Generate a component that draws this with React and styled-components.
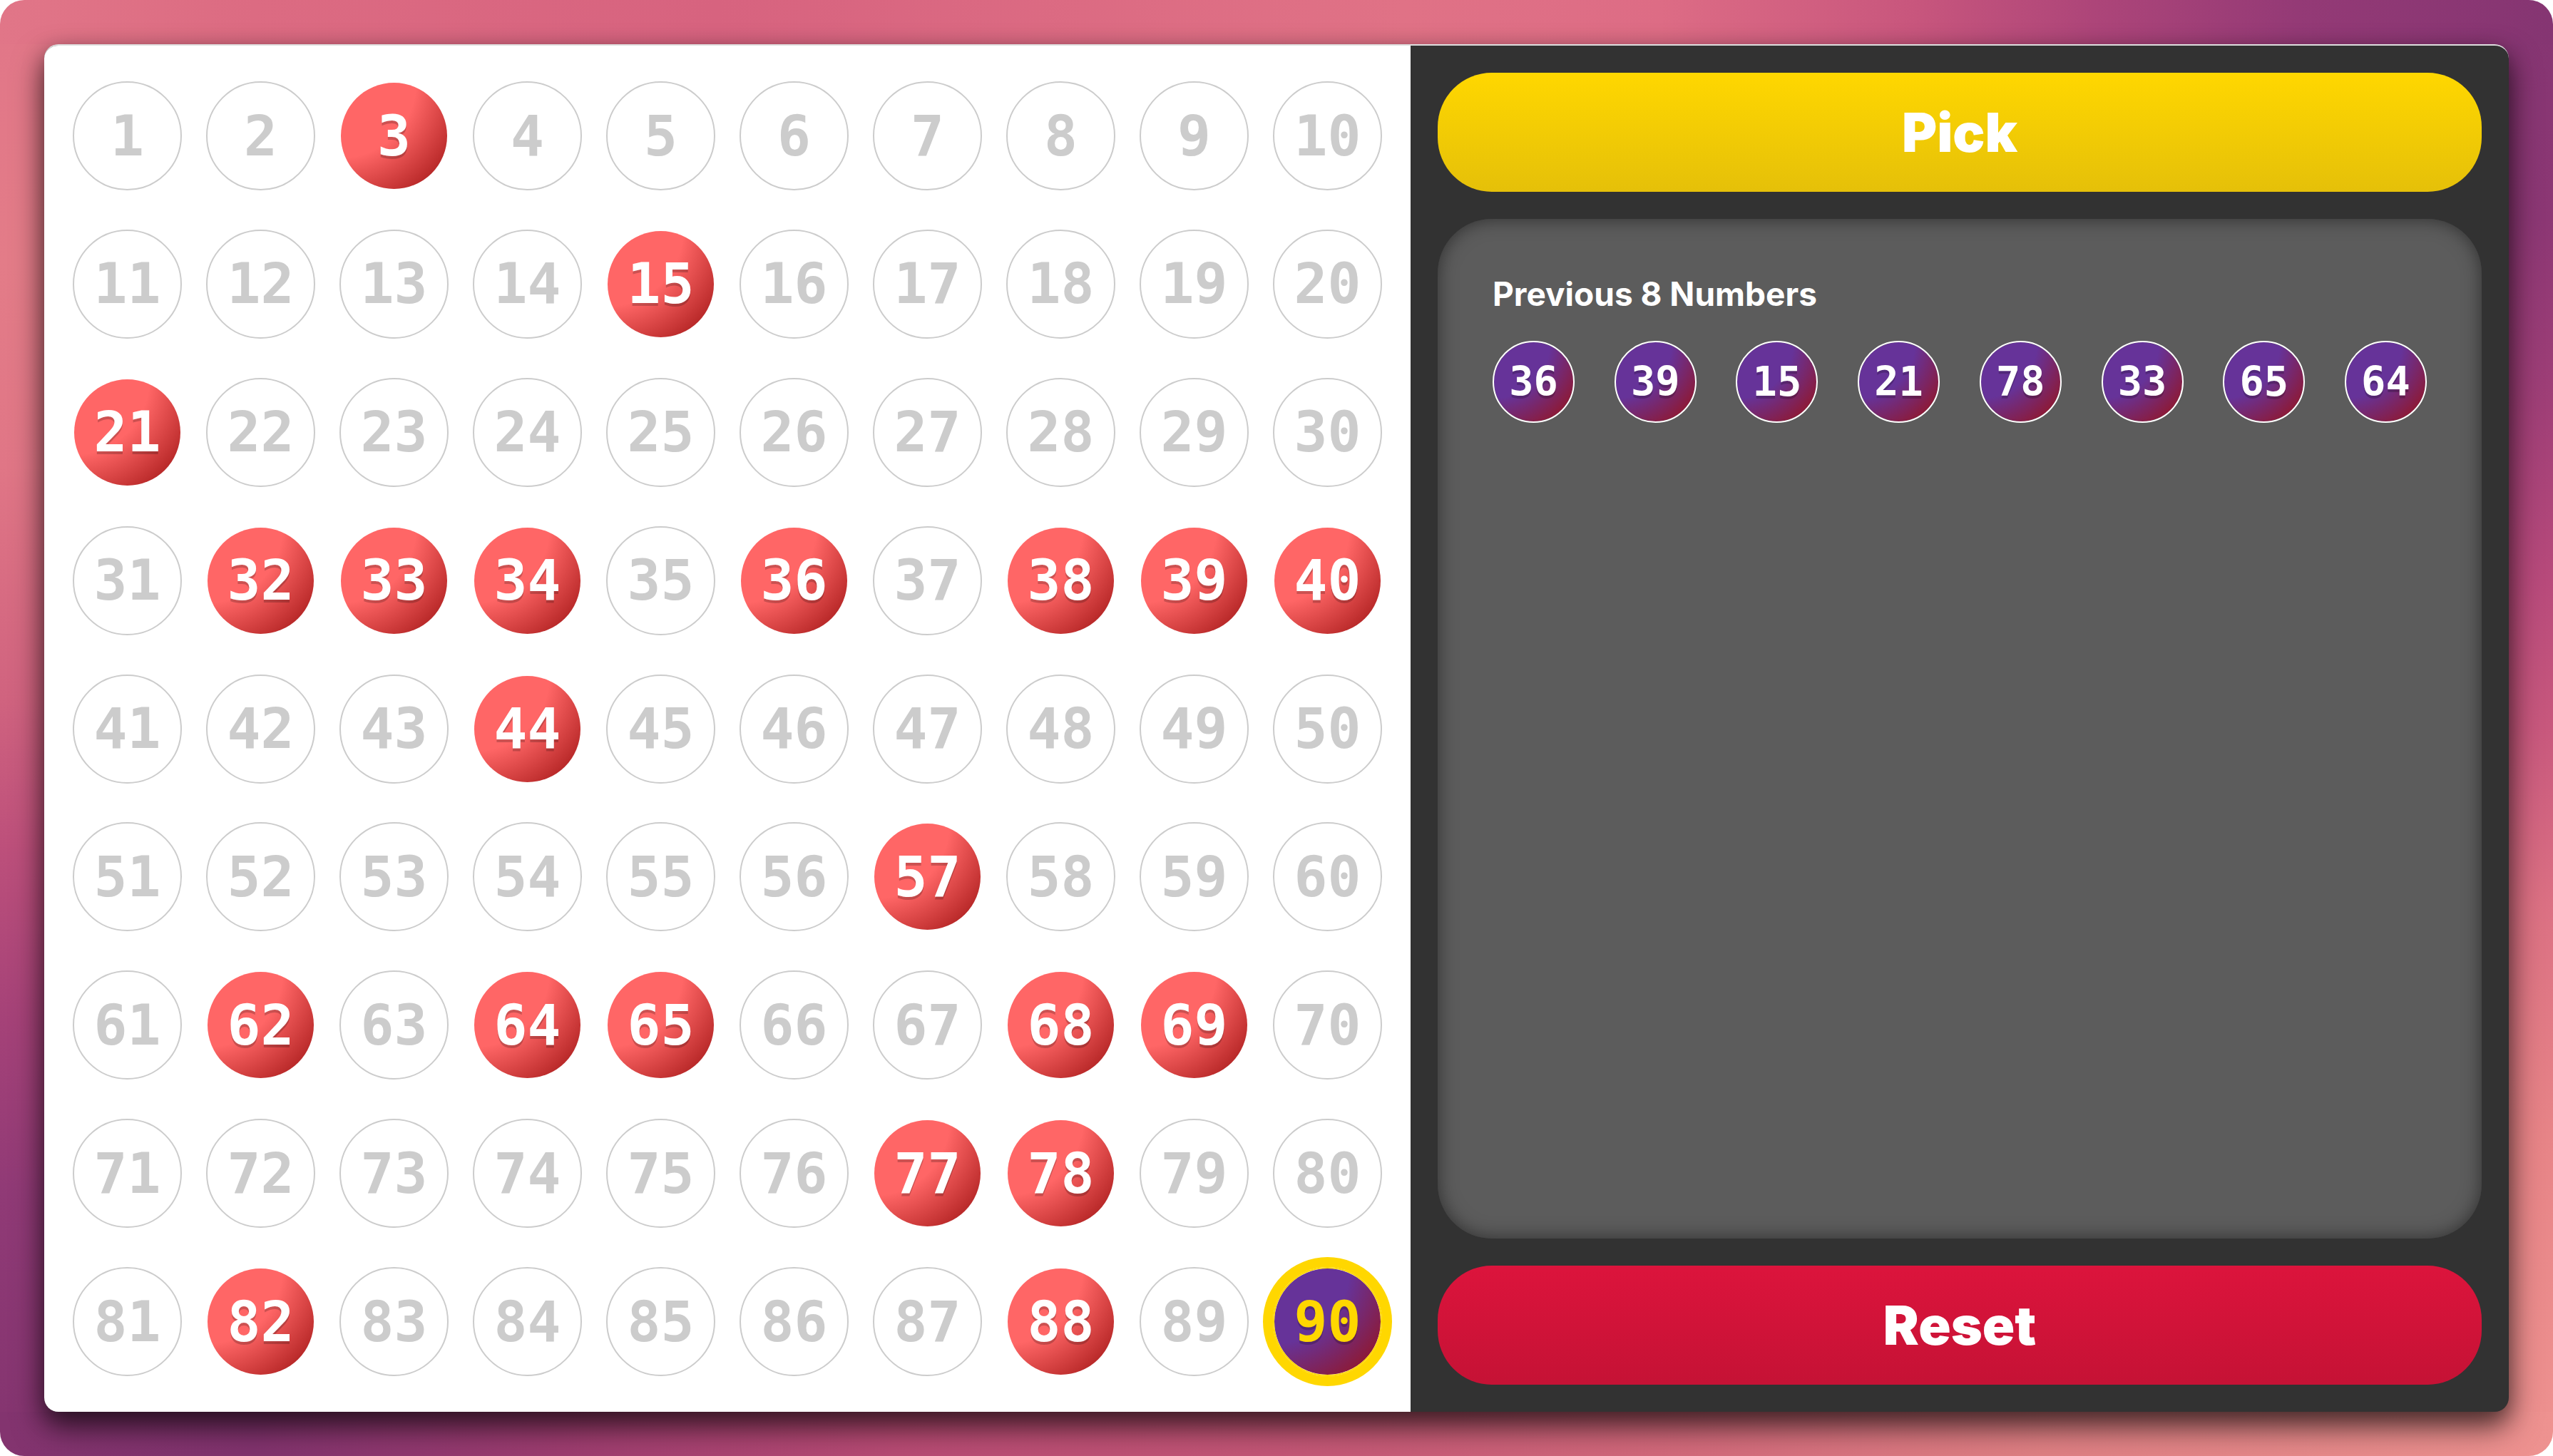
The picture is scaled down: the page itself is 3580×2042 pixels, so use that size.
import React, { useState } from "react";
import styled, { createGlobalStyle, css } from "styled-components";

const GlobalStyle = createGlobalStyle`
  *, *::before, *::after { box-sizing: border-box; }
  body { margin: 0; background: #fff; font-family: Inter, Roboto, sans-serif; }
`;

const Desktop = styled.div`
  height: 100vh;
  padding: 62px;
  display: flex;
  border-radius: 34px;
  background:
    linear-gradient(90deg, #e17688 0%, #dc6b82 10%, #d7637f 28%, #e07286 55%, #dd6c85 65%, #c8567d 75%, #ad4579 82%, #943a76 90%, #853572 100%) top / 100% 62px no-repeat,
    linear-gradient(90deg, #83346f 0%, #82336e 10%, #9e3d70 22%, #b84b74 35%, #c45676 50%, #d3697b 65%, #e08084 80%, #ee9290 100%) bottom / 100% 62px no-repeat,
    linear-gradient(#e17688 0%, #e37c88 18%, #e07686 32%, #d0637f 48%, #bd507b 58%, #a54278 70%, #903a76 82%, #83346f 100%) left / 50% 100% no-repeat,
    linear-gradient(#853572 0%, #8c3774 15%, #a03f77 28%, #b84a7b 40%, #c8587d 50%, #db7083 62%, #e78487 78%, #ee9290 100%) right / 50% 100% no-repeat;
`;

const AppWindow = styled.main`
  flex: 1;
  min-height: 0;
  display: flex;
  border-top: 2px solid #dedede;
  border-radius: 20px;
  overflow: hidden;
  background: #323232;
  box-shadow: 0 22px 44px rgba(0, 0, 0, 0.55), 0 10px 30px rgba(0, 0, 0, 0.35);
`;

const Board = styled.section`
  height: 100%;
  aspect-ratio: 1;
  padding: 50px 40px;
  display: grid;
  grid-template-columns: repeat(10, 1fr);
  column-gap: 34px;
  align-content: space-between;
  background: #fff;
`;

const ballBase = css`
  display: flex;
  align-items: center;
  justify-content: center;
  border-radius: 50%;
  font-family: "DejaVu Sans Mono", monospace;
  font-weight: 700;
  line-height: 1;
`;

const purple = "radial-gradient(circle at 0 0, #639 50%, #9c1010 100%) padding-box";

const looks = {
  idle: css`
    color: #ccc;
    border-color: #ccc;
  `,
  picked: css`
    color: #fff;
    background: radial-gradient(circle at 0 0, #f66 50%, #9c1010 100%) padding-box;
    text-shadow: 0 4px 0 rgba(0, 0, 0, 0.2);
  `,
  current: css`
    color: gold;
    border-color: gold;
    background: ${purple};
    box-shadow: 0 0 0 14px gold;
    text-shadow: 0 4px 0 rgba(0, 0, 0, 0.2);
  `,
};

const Ball = styled.div`
  ${ballBase}
  aspect-ratio: 1;
  border: 2px solid transparent;
  font-size: 78px;
  ${({ $look }) => looks[$look]}
`;

const Side = styled.aside`
  flex: 1;
  min-width: 0;
  padding: 38px;
  display: flex;
  flex-direction: column;
  gap: 38px;
`;

const ActionButton = styled.button`
  height: 167px;
  border: 0;
  border-radius: 76px;
  color: #fff;
  font: 900 75px Inter, Roboto, sans-serif;
  background: linear-gradient(${({ $from, $to }) => `${$from}, ${$to}`});
  cursor: pointer;
`;

const History = styled.section`
  flex: 1;
  padding: 76px 77px;
  border-radius: 76px;
  background: #5c5c5c;
  box-shadow: inset 0 0 26px rgba(0, 0, 0, 0.5);
`;

const HistoryTitle = styled.h2`
  margin: 0 0 36px;
  color: #fff;
  font-size: 46px;
  font-weight: 700;
  line-height: 59px;
`;

const HistoryList = styled.ol`
  margin: 0;
  padding: 0;
  list-style: none;
  display: flex;
  justify-content: space-between;
`;

const HistoryBall = styled.li`
  ${ballBase}
  width: 115px;
  height: 115px;
  border: 2px solid #fff;
  color: #fff;
  font-size: 57px;
  background: ${purple};
  text-shadow: 0 4px 0 rgba(0, 0, 0, 0.2);
`;

const TOTAL = 90;
const HISTORY_SIZE = 8;
const numbers = Array.from({ length: TOTAL }, (_, i) => i + 1);
const initialDraw = [
  90, 36, 39, 15, 21, 78, 33, 65, 64, 3, 32, 34, 38, 40, 44, 57, 62, 68, 69, 77, 82, 88,
];

export default function App() {
  const [draw, setDraw] = useState(initialDraw);
  const [current, ...previous] = draw;

  const pick = () => {
    const left = numbers.filter((n) => !draw.includes(n));
    if (left.length) {
      setDraw([left[Math.floor(Math.random() * left.length)], ...draw]);
    }
  };

  const lookOf = (n) => {
    if (n === current) return "current";
    return draw.includes(n) ? "picked" : "idle";
  };

  return (
    <>
      <GlobalStyle />
      <Desktop>
        <AppWindow>
          <Board>
            {numbers.map((n) => (
              <Ball key={n} $look={lookOf(n)}>{n}</Ball>
            ))}
          </Board>
          <Side>
            <ActionButton type="button" $from="#ffd700" $to="#e5c009" onClick={pick}>Pick</ActionButton>
            <History>
              <HistoryTitle>Previous 8 Numbers</HistoryTitle>
              <HistoryList>
                {previous.slice(0, HISTORY_SIZE).map((n) => (
                  <HistoryBall key={n}>{n}</HistoryBall>
                ))}
              </HistoryList>
            </History>
            <ActionButton type="button" $from="#dc143c" $to="#c51235" onClick={() => setDraw([])}>Reset</ActionButton>
          </Side>
        </AppWindow>
      </Desktop>
    </>
  );
}
